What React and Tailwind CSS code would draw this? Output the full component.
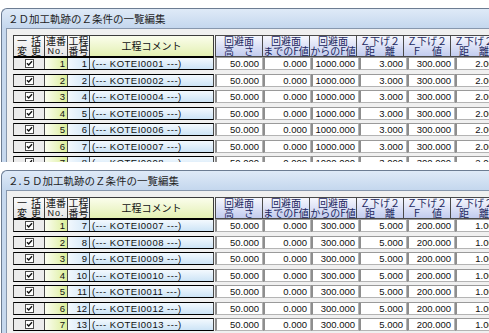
const jp = { fontFamily: '"Noto Sans CJK JP", "Noto Sans", sans-serif' }
const num = { fontFamily: '"Liberation Sans", Arial, sans-serif' }

const heads = [
  ['回避面', '高　さ'],
  ['回避面', 'までのF値'],
  ['回避面', 'からのF値'],
  ['Ｚ下げ２', '距　離'],
  ['Ｚ下げ２', 'Ｆ　値'],
  ['Ｚ下げ２', '距　離'],
]

const windows = [
  {
    title: '２Ｄ加工軌跡のＺ条件の一覧編集',
    rows: [[1, 1], [2, 2], [3, 4], [4, 5], [5, 6], [6, 7], [7, 8]],
    vals: ['50.000', '0.000', '1000.000', '3.000', '300.000', '2.000'],
  },
  {
    title: '２.５Ｄ加工軌跡のＺ条件の一覧編集',
    rows: [[1, 7], [2, 8], [3, 9], [4, 10], [5, 11], [6, 12], [7, 13]],
    vals: ['50.000', '0.000', '300.000', '5.000', '200.000', '1.000'],
  },
]

function Check() {
  return (
    <svg width="9" height="9" viewBox="0 0 9 9">
      <rect x="0.5" y="0.5" width="8" height="8" fill="#fff" stroke="#4a4a4a" />
      <path d="M2 4.2 L3.7 6 L7 2.3" fill="none" stroke="#111" strokeWidth="1.4" />
    </svg>
  )
}

function Header() {
  return (
    <div className="flex h-[22px] text-[10px] leading-[10px] whitespace-nowrap" style={jp}>
      <div className="flex w-[201px] border border-[#3c3c3c] border-b-[#000] text-[#111]">
        <div className="w-[31px] flex flex-col justify-center px-[3px] border-r border-[#3c3c3c] bg-gradient-to-b from-[#fafafa] to-[#e6e6e6]">
          <span className="flex justify-between"><span>一</span><span>括</span></span>
          <span className="flex justify-between"><span>変</span><span>更</span></span>
        </div>
        <div className="w-[23px] flex flex-col items-center justify-center border-r border-[#3c3c3c] bg-gradient-to-b from-[#fafafa] to-[#e6e6e6]">
          <span>連番</span>
          <span style={num} className="text-[9px] tracking-[1px]">No.</span>
        </div>
        <div className="w-[22px] flex flex-col items-center justify-center border-r border-[#3c3c3c] bg-gradient-to-b from-[#fafafa] to-[#e6e6e6]">
          <span>工程</span>
          <span>番号</span>
        </div>
        <div className="flex-1 flex items-center justify-center bg-gradient-to-b from-[#fbfdec] to-[#e3f0b2]">
          工程コメント
        </div>
      </div>
      <div className="flex ml-px">
        {heads.map((h, i) => (
          <div
            key={i}
            className="w-[48px] flex flex-col items-center justify-center border border-[#4a4a4a] -ml-px first:ml-0 bg-gradient-to-b from-[#f6f7fd] to-[#c3ccef] text-[#1c2860]"
          >
            <span>{h[0]}</span>
            <span>{h[1]}</span>
          </div>
        ))}
      </div>
    </div>
  )
}

function Row({ no, step, vals, i }) {
  const code = String(step).padStart(4, '0')
  const gap = i === 0 ? '' : i % 2 ? 'mt-[4px]' : 'mt-[3px]'
  return (
    <div className={`flex h-[13px] text-[9.5px] leading-[10px] whitespace-nowrap ${gap}`}>
      <div className="flex w-[201px] border border-[#4a4a4a] border-y-[#000] text-[#111]">
        <div className="w-[31px] flex items-center justify-center border-r border-[#4a4a4a] bg-[#ececec]">
          <Check />
        </div>
        <div
          className="w-[23px] flex items-center justify-end pr-[2px] border-r border-[#4a4a4a] bg-gradient-to-r from-[#fbfdf0] to-[#dcee98]"
          style={num}
        >
          {no}
        </div>
        <div
          className="w-[22px] flex items-center justify-end pr-[2px] border-r border-[#4a4a4a] bg-gradient-to-r from-[#f2f8fd] to-[#d2e7f8]"
          style={num}
        >
          {step}
        </div>
        <div
          className="flex-1 flex items-center pl-[2px] tracking-[0.5px] bg-gradient-to-b from-[#f3f9fe] to-[#cde4f6]"
          style={num}
        >
          (--- KOTEI{code} ---)
        </div>
      </div>
      <div className="flex ml-px">
        {vals.map((v, k) => (
          <div
            key={k}
            className="w-[48px] flex items-center justify-end pr-[3px] bg-white border border-[#b4b4b4] border-l-2 border-l-[#8e8e8e] border-t-[#9a9a9a] text-[#111]"
            style={num}
          >
            {v}
          </div>
        ))}
      </div>
    </div>
  )
}

function Window({ title, rows, vals }) {
  return (
    <div className="ml-px w-[620px] h-full flex flex-col rounded-tl-[6px] border-l border-t border-[#6c7c92] bg-[#c6d8ee]">
      <div
        className="h-[19px] shrink-0 flex items-center pl-[6px] rounded-tl-[6px] bg-gradient-to-b from-[#dfeaf7] to-[#c4d7ee] text-[10.5px] text-[#1e1e1e] whitespace-nowrap"
        style={jp}
      >
        {title}
      </div>
      <div className="flex-1 ml-[4px] border-l border-t border-[#8797ad] bg-[#f0f0f0] pt-[6px] pl-[6px]">
        <Header />
        {rows.map(([no, step], i) => (
          <Row key={i} no={no} step={step} vals={vals} i={i} />
        ))}
      </div>
    </div>
  )
}

export default function App() {
  return (
    <div className="w-[489px] h-[333px] overflow-hidden bg-white flex flex-col">
      <div className="pt-[8px] h-[162px] shrink-0 overflow-hidden">
        <Window {...windows[0]} />
      </div>
      <div className="mt-[8px] h-[163px] shrink-0 overflow-hidden">
        <Window {...windows[1]} />
      </div>
    </div>
  )
}
